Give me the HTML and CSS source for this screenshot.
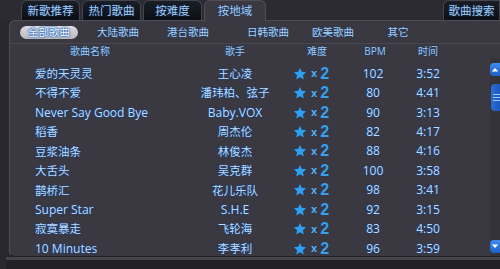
FILE: index.html
```html
<!DOCTYPE html>
<html lang="zh">
<head>
<meta charset="utf-8">
<link rel="stylesheet" href="styles.css">
</head>
<body>
<div class="app">
  <div class="tabbar">
    <div class="tab">新歌推荐</div>
    <div class="tab">热门歌曲</div>
    <div class="tab">按难度</div>
    <div class="tab active">按地域</div>
    <div class="tab-space"></div>
    <div class="tab search">歌曲搜索</div>
  </div>
  <div class="panel">
    <div class="subtabs">
      <div class="sub"><span class="pill">全部歌曲</span></div>
      <div class="sub">大陆歌曲</div>
      <div class="sub">港台歌曲</div>
      <div class="sub">日韩歌曲</div>
      <div class="sub">欧美歌曲</div>
      <div class="sub">其它</div>
    </div>
    <div class="head">
      <div>歌曲名称</div>
      <div>歌手</div>
      <div>难度</div>
      <div class="lat">BPM</div>
      <div>时间</div>
    </div>
    <div class="body">
      <div class="list">
        <div class="row"><div class="t">爱的天灵灵</div><div class="s">王心凌</div><div class="d"><svg class="star" viewBox="0 0 24 24"><path d="M12 1.5l3.1 6.8 7.4.8-5.5 5 1.6 7.3L12 17.7l-6.6 3.7 1.6-7.3-5.5-5 7.4-.8z"/></svg><span class="x">x</span><span class="n">2</span></div><div class="b">102</div><div class="m">3:52</div></div>
        <div class="row"><div class="t">不得不爱</div><div class="s">潘玮柏、弦子</div><div class="d"><svg class="star" viewBox="0 0 24 24"><path d="M12 1.5l3.1 6.8 7.4.8-5.5 5 1.6 7.3L12 17.7l-6.6 3.7 1.6-7.3-5.5-5 7.4-.8z"/></svg><span class="x">x</span><span class="n">2</span></div><div class="b">80</div><div class="m">4:41</div></div>
        <div class="row"><div class="t lat">Never Say Good Bye</div><div class="s lat">Baby.VOX</div><div class="d"><svg class="star" viewBox="0 0 24 24"><path d="M12 1.5l3.1 6.8 7.4.8-5.5 5 1.6 7.3L12 17.7l-6.6 3.7 1.6-7.3-5.5-5 7.4-.8z"/></svg><span class="x">x</span><span class="n">2</span></div><div class="b">90</div><div class="m">3:13</div></div>
        <div class="row"><div class="t">稻香</div><div class="s">周杰伦</div><div class="d"><svg class="star" viewBox="0 0 24 24"><path d="M12 1.5l3.1 6.8 7.4.8-5.5 5 1.6 7.3L12 17.7l-6.6 3.7 1.6-7.3-5.5-5 7.4-.8z"/></svg><span class="x">x</span><span class="n">2</span></div><div class="b">82</div><div class="m">4:17</div></div>
        <div class="row"><div class="t">豆浆油条</div><div class="s">林俊杰</div><div class="d"><svg class="star" viewBox="0 0 24 24"><path d="M12 1.5l3.1 6.8 7.4.8-5.5 5 1.6 7.3L12 17.7l-6.6 3.7 1.6-7.3-5.5-5 7.4-.8z"/></svg><span class="x">x</span><span class="n">2</span></div><div class="b">88</div><div class="m">4:16</div></div>
        <div class="row"><div class="t">大舌头</div><div class="s">吴克群</div><div class="d"><svg class="star" viewBox="0 0 24 24"><path d="M12 1.5l3.1 6.8 7.4.8-5.5 5 1.6 7.3L12 17.7l-6.6 3.7 1.6-7.3-5.5-5 7.4-.8z"/></svg><span class="x">x</span><span class="n">2</span></div><div class="b">100</div><div class="m">3:58</div></div>
        <div class="row"><div class="t">鹊桥汇</div><div class="s">花儿乐队</div><div class="d"><svg class="star" viewBox="0 0 24 24"><path d="M12 1.5l3.1 6.8 7.4.8-5.5 5 1.6 7.3L12 17.7l-6.6 3.7 1.6-7.3-5.5-5 7.4-.8z"/></svg><span class="x">x</span><span class="n">2</span></div><div class="b">98</div><div class="m">3:41</div></div>
        <div class="row"><div class="t lat">Super Star</div><div class="s lat">S.H.E</div><div class="d"><svg class="star" viewBox="0 0 24 24"><path d="M12 1.5l3.1 6.8 7.4.8-5.5 5 1.6 7.3L12 17.7l-6.6 3.7 1.6-7.3-5.5-5 7.4-.8z"/></svg><span class="x">x</span><span class="n">2</span></div><div class="b">92</div><div class="m">3:15</div></div>
        <div class="row"><div class="t">寂寞暴走</div><div class="s">飞轮海</div><div class="d"><svg class="star" viewBox="0 0 24 24"><path d="M12 1.5l3.1 6.8 7.4.8-5.5 5 1.6 7.3L12 17.7l-6.6 3.7 1.6-7.3-5.5-5 7.4-.8z"/></svg><span class="x">x</span><span class="n">2</span></div><div class="b">83</div><div class="m">4:50</div></div>
        <div class="row"><div class="t lat">10 Minutes</div><div class="s">李孝利</div><div class="d"><svg class="star" viewBox="0 0 24 24"><path d="M12 1.5l3.1 6.8 7.4.8-5.5 5 1.6 7.3L12 17.7l-6.6 3.7 1.6-7.3-5.5-5 7.4-.8z"/></svg><span class="x">x</span><span class="n">2</span></div><div class="b">96</div><div class="m">3:59</div></div>
      </div>
      <div class="scroll">
        <div class="btn"><svg viewBox="0 0 10 6"><path d="M1 5.5L5 1l4 4.5z"/></svg></div>
        <div class="thumb"><i></i><i></i><i></i></div>
        <div class="track"></div>
        <div class="btn"><svg viewBox="0 0 10 6"><path d="M1 .5L5 5l4-4.5z"/></svg></div>
      </div>
    </div>
  </div>
  <div class="foot"></div>
</div>
</body>
</html>
```
FILE: styles.css
```css
html, body {
  margin: 0;
  padding: 0;
}
body {
  width: 500px;
  height: 269px;
  overflow: hidden;
  background: #29282e;
  font-family: "Noto Sans CJK SC", "Noto Sans", sans-serif;
  color: #b2d6f8;
}
.app {
  display: flex;
  flex-direction: column;
  height: 269px;
}
.tabbar {
  height: 20px;
  display: flex;
  padding-left: 21px;
  background: #2c2b31;
}
.tab {
  width: 59px;
  margin-right: 2px;
  display: flex;
  align-items: center;
  justify-content: center;
  background: linear-gradient(#1a1e27, #0c0f15);
  border: 1px solid #45444c;
  border-bottom: none;
  border-radius: 6px 6px 0 0;
  box-sizing: border-box;
  font-size: 11.5px;
  line-height: 1;
  color: #a3cef5;
  text-shadow: 0 0 2px #123a78;
}
.tab.active {
  width: 62px;
  background: #3a3942;
  border-color: #4f4e56;
  position: relative;
  z-index: 1;
  height: 21px;
}
.tab-space {
  flex: 1;
}
.tab.search {
  width: 57px;
  margin-right: 0;
  border-radius: 6px 0 0 0;
}
.panel {
  flex: 1;
  margin-left: 9px;
  background: #3a3942;
  border-top: 1px solid #4f4e56;
  border-left: 1px solid #4f4e56;
  border-bottom: 1px solid #222126;
  border-radius: 6px 0 0 6px;
  display: flex;
  flex-direction: column;
  min-height: 0;
}
.subtabs {
  height: 22px;
  display: grid;
  grid-template-columns: 78px 60px 80px 80px 50px 80px;
  align-items: center;
  border-bottom: 1px solid #48474f;
  font-size: 10.5px;
  line-height: 1;
  color: #a7d0f6;
  text-shadow: 0 0 2px #123a78;
}
.sub {
  text-align: center;
  white-space: nowrap;
}
.pill {
  display: inline-flex;
  align-items: center;
  justify-content: center;
  width: 58px;
  height: 13px;
  border-radius: 7px;
  background: linear-gradient(#dcdce0, #b9b9be);
  color: #f4f8ff;
  text-shadow: 0 0 1px #1e5fb8, 0 0 2px #1e5fb8, 0 0 2px #1e5fb8;
}
.head {
  height: 14px;
  display: grid;
  grid-template-columns: 160px 130px 34px 82px 24px;
  align-items: center;
  font-size: 10px;
  line-height: 1;
  color: #9ccaf3;
  text-shadow: 0 0 2px #123a78;
}
.head > div {
  text-align: center;
  white-space: nowrap;
}
.lat {
  font-family: "Open Sans", "Noto Sans", sans-serif;
}
.body {
  flex: 1;
  display: flex;
  min-height: 0;
}
.list {
  flex: 1;
  padding-top: 6px;
}
.row {
  height: 19.45px;
  display: grid;
  grid-template-columns: 175px 100px 60px 56px 54px;
  align-items: center;
  font-size: 11.5px;
  line-height: 1;
  color: #b9dbfa;
  text-shadow: 0 0 1px #0e3f8a, 0 0 2px #1a4a92;
  white-space: nowrap;
}
.row .t {
  padding-left: 25px;
}
.row .lat {
  font-size: 12px;
}
.row .s, .row .b, .row .m {
  text-align: center;
}
.row .b, .row .m {
  font-family: "Open Sans", "Noto Sans", sans-serif;
  font-size: 12px;
}
.row .s {
  margin-left: -14px;
  margin-right: -14px;
}
.d {
  display: flex;
  align-items: center;
  padding-left: 8px;
  text-shadow: none;
}
.star {
  width: 14px;
  height: 14px;
  fill: #2f9ff0;
  filter: drop-shadow(0 0 0.6px #0b3470);
}
.x {
  margin-left: 4px;
  font-family: "Liberation Sans", sans-serif;
  font-size: 11px;
  font-weight: 700;
  color: #62b2ef;
  text-shadow: 0 0 1px #0d3a7a;
}
.n {
  margin-left: 3px;
  font-family: "Liberation Sans", sans-serif;
  font-size: 16px;
  font-weight: 700;
  color: #3d9fe6;
  text-shadow: 0 0 1px #0d3a7a;
}
.scroll {
  width: 10px;
  display: flex;
  flex-direction: column;
  background: #34333a;
  padding: 5px 0 3px;
}
.btn {
  height: 13px;
  border-radius: 4px 0 0 4px;
  background: linear-gradient(#3f8cf0, #1d5fc8);
  display: flex;
  align-items: center;
  justify-content: center;
}
.btn svg {
  width: 8px;
  height: 5px;
  fill: #ffffff;
}
.thumb {
  margin-top: 8px;
  margin-left: 1px;
  height: 27px;
  border-radius: 4px 0 0 4px;
  background: linear-gradient(90deg, #2b6fd6, #1c58bd);
  display: flex;
  flex-direction: column;
  justify-content: center;
  gap: 2px;
  padding-left: 2px;
}
.thumb i {
  display: block;
  height: 1px;
  background: #9cc6f5;
}
.track {
  flex: 1;
}
.foot {
  height: 9px;
  margin-left: 6px;
  border-top: 3px solid #45444b;
  background: #222126;
}
```
